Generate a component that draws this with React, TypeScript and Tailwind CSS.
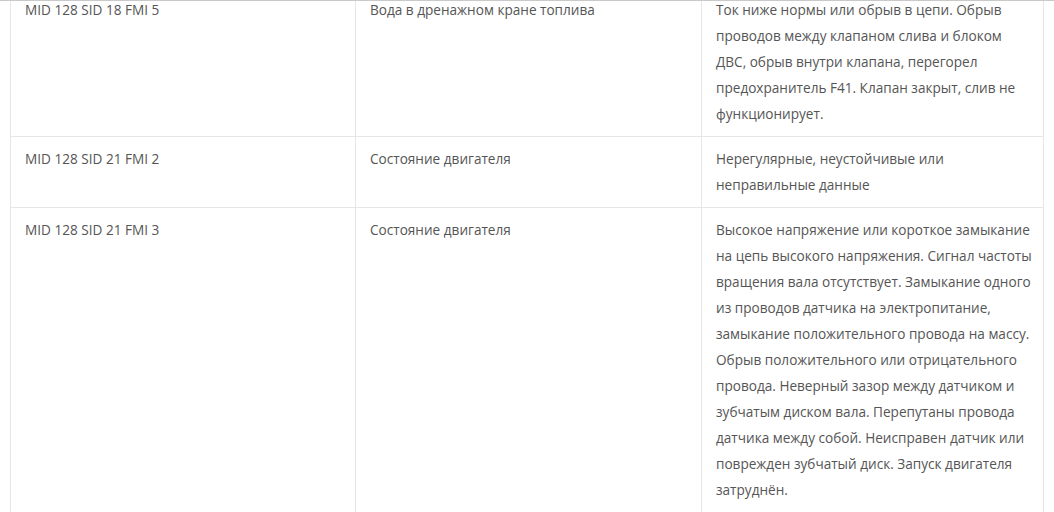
const rows = [
  {
    code: "MID 128 SID 18 FMI 5",
    name: "Вода в дренажном кране топлива",
    desc: "Ток ниже нормы или обрыв в цепи. Обрыв проводов между клапаном слива и блоком ДВС, обрыв внутри клапана, перегорел предохранитель F41. Клапан закрыт, слив не функционирует.",
  },
  {
    code: "MID 128 SID 21 FMI 2",
    name: "Состояние двигателя",
    desc: "Нерегулярные, неустойчивые или неправильные данные",
  },
  {
    code: "MID 128 SID 21 FMI 3",
    name: "Состояние двигателя",
    desc: "Высокое напряжение или короткое замыкание на цепь высокого напряжения. Сигнал частоты вращения вала отсутствует. Замыкание одного из проводов датчика на электропитание, замыкание положительного провода на массу. Обрыв положительного или отрицательного провода. Неверный зазор между датчиком и зубчатым диском вала. Перепутаны провода датчика между собой. Неисправен датчик или поврежден зубчатый диск. Запуск двигателя затруднён.",
  },
];

export default function App() {
  return (
    <div
      className="relative h-[512px] w-[1054px] overflow-hidden bg-white"
      style={{ fontFamily: '"Open Sans", "Noto Sans", sans-serif' }}
    >
      <div className="absolute inset-x-0 top-0 z-10 h-px bg-[#c9c9c9]" />
      <table className="ml-[10px] mt-[-13px] w-[1034px] table-fixed border-collapse text-[13.6px] leading-[26px] text-[#555]">
        <colgroup>
          <col className="w-[345px]" />
          <col className="w-[346px]" />
          <col />
        </colgroup>
        <tbody>
          {rows.map((r, i) => (
            <tr key={i}>
              <td className="border border-[#e6e6e6] px-[14px] pt-[9px] pb-[9px] align-top">{r.code}</td>
              <td className="border border-[#e6e6e6] px-[14px] pt-[9px] pb-[9px] align-top">{r.name}</td>
              <td className="border border-[#e6e6e6] pl-[14px] pr-[10px] pt-[9px] pb-[9px] align-top">{r.desc}</td>
            </tr>
          ))}
        </tbody>
      </table>
    </div>
  );
}
